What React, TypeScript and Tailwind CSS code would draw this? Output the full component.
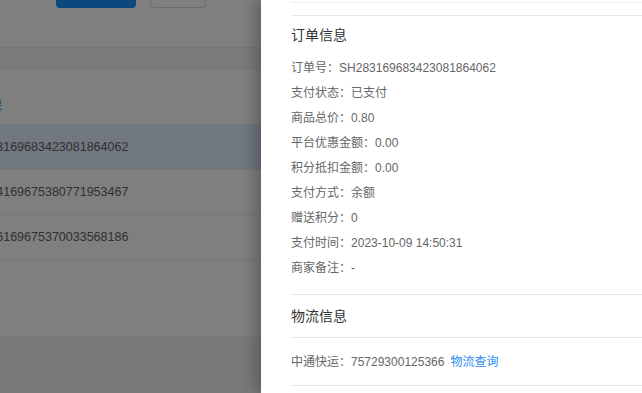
const orderInfo = [
  { label: '订单号', value: 'SH283169683423081864062' },
  { label: '支付状态', value: '已支付' },
  { label: '商品总价', value: '0.80' },
  { label: '平台优惠金额', value: '0.00' },
  { label: '积分抵扣金额', value: '0.00' },
  { label: '支付方式', value: '余额' },
  { label: '赠送积分', value: '0' },
  { label: '支付时间', value: '2023-10-09 14:50:31' },
  { label: '商家备注', value: '-' },
]

const rows = [
  { no: 'SH283169683423081864062', active: true },
  { no: 'SH284169675380771953467', active: false },
  { no: 'SH286169675370033568186', active: false },
]

export default function App() {
  return (
    <div
      className="relative h-[393px] w-[642px] overflow-hidden bg-white"
      style={{ fontFamily: '"Liberation Sans", "Noto Sans CJK SC", sans-serif' }}
    >
      {/* page behind the drawer */}
      <div className="flex h-full flex-col">
        <div className="h-[47px] bg-white">
          <div className="-mt-6 flex gap-[14px] pl-[56px]">
            <div className="h-8 w-[80px] rounded-[4px] bg-[#1890ff]" />
            <div className="h-8 w-[56px] rounded-[4px] border border-[#d9d9d9] bg-white" />
          </div>
        </div>
        <div className="h-[22px] border-y border-[#ebeef5] bg-[#f5f7fa]" />
        <div className="h-[56px] border-b border-[#ebeef5] pt-[25px]">
          <span className="-ml-[33px] text-[12px] leading-[16px] text-[#409eff]">订单号</span>
        </div>
        {rows.map((row) => (
          <div
            key={row.no}
            className={
              'flex h-[45px] items-center border-b border-[#ebeef5] ' +
              (row.active ? 'bg-[#e3eeff]' : 'bg-white')
            }
          >
            <span className="-ml-[35px] whitespace-nowrap text-[12.5px] text-[#606266]">{row.no}</span>
          </div>
        ))}
        <div className="h-[78px] border-b border-[#ebeef5]" />
        <div className="flex-1 bg-[#f0f2f5]" />
      </div>

      {/* mask */}
      <div className="absolute inset-0 bg-black/50" />

      {/* drawer */}
      <div className="absolute bottom-0 left-[261px] top-0 w-[440px] bg-white px-[30px] shadow-[-6px_0_14px_rgba(0,0,0,0.25)]">
        <div className="h-[3px] border-b border-[#eeeeee]" />
        <div className="h-[13px] border-b border-[#e4e7ed]" />
        <div className="border-b border-[#e4e7ed] pb-[14px]">
          <div className="flex h-[39px] items-center text-[14px] text-[#333333]">订单信息</div>
          {orderInfo.map((item) => (
            <div key={item.label} className="flex h-[25px] items-center text-[12px] text-[#666666]">
              {item.label}：{item.value}
            </div>
          ))}
        </div>
        <div className="flex h-[43px] items-center border-b border-[#e4e7ed] text-[14px] text-[#333333]">
          物流信息
        </div>
        <div className="flex h-[48px] items-center border-b border-[#e4e7ed] text-[12px] text-[#666666]">
          中通快运：75729300125366
          <a href="#" className="ml-1.5 text-[#2d8cf0]">物流查询</a>
        </div>
      </div>
    </div>
  )
}
